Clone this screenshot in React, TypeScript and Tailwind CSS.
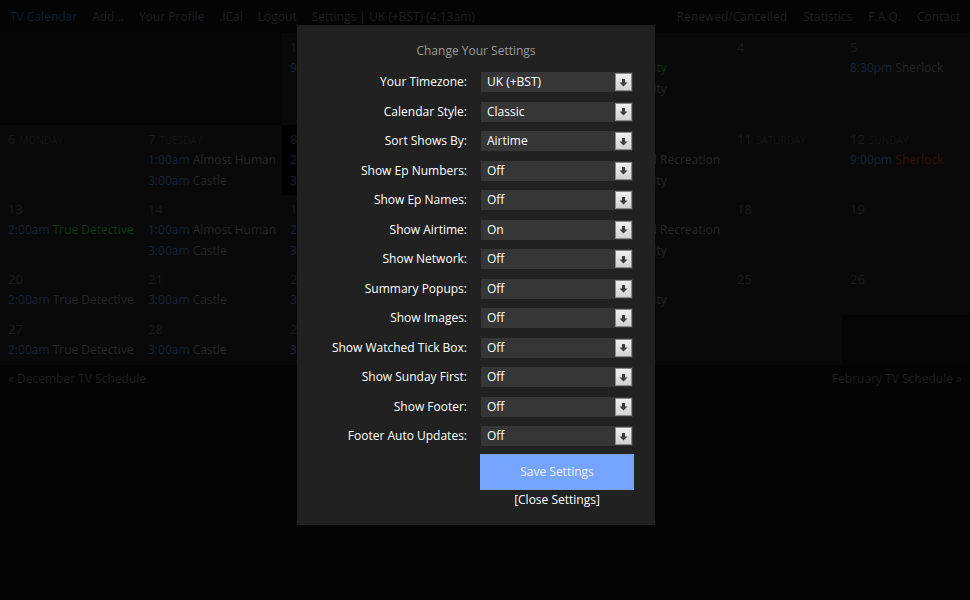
import React from 'react';

type Entry = { time: string; show: string; tone?: 'green' | 'red' };
type Cell = { date?: string; day?: string; entries?: Entry[]; bg?: 'empty' | 'today' | 'cell' };

const colWidths = 'grid-cols-[140px_142px_138px_129px_180px_113px_128px]';

const weeks: { height: string; cells: Cell[] }[] = [
  {
    height: 'h-[92px]',
    cells: [
      { bg: 'empty' },
      { bg: 'empty' },
      { date: '1', entries: [{ time: '9:00pm', show: 'Sherlock' }] },
      { date: '2' },
      { date: '3', entries: [{ time: '2:00am', show: 'Community', tone: 'green' }, { time: '2:30am', show: 'Community' }] },
      { date: '4' },
      { date: '5', entries: [{ time: '8:30pm', show: 'Sherlock' }] },
    ],
  },
  {
    height: 'h-[70px]',
    cells: [
      { date: '6', day: 'Monday' },
      { date: '7', day: 'Tuesday', entries: [{ time: '1:00am', show: 'Almost Human' }, { time: '3:00am', show: 'Castle' }] },
      { date: '8', day: 'Wednesday', bg: 'today', entries: [{ time: '2:00am', show: 'Arrow' }, { time: '3:00am', show: 'Nashville' }] },
      { date: '9', day: 'Thursday' },
      { date: '10', day: 'Friday', entries: [{ time: '1:30am', show: 'Parks and Recreation' }, { time: '2:00am', show: 'Community' }] },
      { date: '11', day: 'Saturday' },
      { date: '12', day: 'Sunday', entries: [{ time: '9:00pm', show: 'Sherlock', tone: 'red' }] },
    ],
  },
  {
    height: 'h-[70px]',
    cells: [
      { date: '13', entries: [{ time: '2:00am', show: 'True Detective', tone: 'green' }] },
      { date: '14', entries: [{ time: '1:00am', show: 'Almost Human' }, { time: '3:00am', show: 'Castle' }] },
      { date: '15', entries: [{ time: '2:00am', show: 'Arrow' }, { time: '3:00am', show: 'Nashville' }] },
      { date: '16' },
      { date: '17', entries: [{ time: '1:30am', show: 'Parks and Recreation' }, { time: '2:00am', show: 'Community' }] },
      { date: '18' },
      { date: '19' },
    ],
  },
  {
    height: 'h-[50px]',
    cells: [
      { date: '20', entries: [{ time: '2:00am', show: 'True Detective' }] },
      { date: '21', entries: [{ time: '3:00am', show: 'Castle' }] },
      { date: '22', entries: [{ time: '3:00am', show: 'Nashville' }] },
      { date: '23' },
      { date: '24', entries: [{ time: '2:00am', show: 'Community' }] },
      { date: '25' },
      { date: '26' },
    ],
  },
  {
    height: 'h-[50px]',
    cells: [
      { date: '27', entries: [{ time: '2:00am', show: 'True Detective' }] },
      { date: '28', entries: [{ time: '3:00am', show: 'Castle' }] },
      { date: '29', entries: [{ time: '3:00am', show: 'Nashville' }] },
      { date: '30' },
      { date: '31' },
      { bg: 'cell' },
      { bg: 'empty' },
    ],
  },
];

const settings: [string, string][] = [
  ['Your Timezone:', 'UK (+BST)'],
  ['Calendar Style:', 'Classic'],
  ['Sort Shows By:', 'Airtime'],
  ['Show Ep Numbers:', 'Off'],
  ['Show Ep Names:', 'Off'],
  ['Show Airtime:', 'On'],
  ['Show Network:', 'Off'],
  ['Summary Popups:', 'Off'],
  ['Show Images:', 'Off'],
  ['Show Watched Tick Box:', 'Off'],
  ['Show Sunday First:', 'Off'],
  ['Show Footer:', 'Off'],
  ['Footer Auto Updates:', 'Off'],
];

const CalCell = ({ cell }: { cell: Cell }) => {
  const bg =
    cell.bg === 'empty' ? 'bg-[#050505]' : cell.bg === 'today' ? 'bg-[#010101]' : 'bg-[#090909]';
  return (
    <div className={`${bg} px-2 pt-1 overflow-hidden whitespace-nowrap`}>
      {cell.date && (
        <div className="h-[20px] leading-[20px] text-[13px] text-[#1b1b1b]">
          {cell.date}
          {cell.day && <span className="ml-1 text-[10px] uppercase text-[#151515]">{cell.day}</span>}
        </div>
      )}
      {cell.entries?.map((e, i) => (
        <div key={i} className="h-[21px] leading-[21px]">
          <span className="text-[#15233a]">{e.time}</span>{' '}
          <span
            className={
              e.tone === 'green' ? 'text-[#0c360f]' : e.tone === 'red' ? 'text-[#380e06]' : 'text-[#262626]'
            }
          >
            {e.show}
          </span>
        </div>
      ))}
    </div>
  );
};

const SelectBox = ({ value }: { value: string }) => (
  <div className="h-[20px] bg-[#363636] flex items-center justify-between pl-[6px] pr-[1px] text-white">
    <span>{value}</span>
    <span className="w-[17px] h-[18px] border border-[#8a8a8a] bg-gradient-to-b from-[#f0f0f0] to-[#d2d2d2] flex items-center justify-center">
      <svg width="9" height="9" viewBox="0 0 9 9">
        <path d="M3 1h3v3.5h2.5L4.5 8.5 0.5 4.5H3z" fill="#3c3c3c" />
      </svg>
    </span>
  </div>
);

export default function App() {
  return (
    <div
      className="relative w-[970px] h-[600px] bg-[#040404] text-[12px] overflow-hidden"
      style={{ fontFamily: '"Open Sans", "Noto Sans", sans-serif' }}
    >
      {/* top nav */}
      <div className="h-[33px] flex items-center justify-between px-[10px] text-[#1f1f1f]">
        <div className="flex gap-[15px]">
          <span className="text-[#0e1c32]">TV Calendar</span>
          <span>Add...</span>
          <span>Your Profile</span>
          <span>.iCal</span>
          <span>Logout</span>
          <span>Settings | UK (+BST) (4:13am)</span>
        </div>
        <div className="flex gap-[16px]">
          <span>Renewed/Cancelled</span>
          <span>Statistics</span>
          <span>F.A.Q.</span>
          <span>Contact</span>
        </div>
      </div>

      {/* calendar */}
      <div className="flex flex-col">
        {weeks.map((w, i) => (
          <div key={i} className={`grid ${colWidths} ${w.height}`}>
            {w.cells.map((c, j) => (
              <CalCell key={j} cell={c} />
            ))}
          </div>
        ))}
      </div>
      <div className="flex justify-between px-2 mt-[5px] text-[#1f1f1f]">
        <span>« December TV Schedule</span>
        <span>February TV Schedule »</span>
      </div>

      {/* settings modal */}
      <div className="absolute left-[297px] top-[25px] w-[358px] h-[500px] bg-[#212121] pt-[16px]">
        <div className="text-center text-[#9a9a9a] leading-[20px]">Change Your Settings</div>
        <div className="mt-[11px] px-5 grid grid-cols-[150px_152px] gap-x-[14px] gap-y-[9.5px] items-center">
          {settings.map(([label, value]) => (
            <React.Fragment key={label}>
              <div className="text-right text-white whitespace-nowrap leading-[20px]">{label}</div>
              <SelectBox value={value} />
            </React.Fragment>
          ))}
          <div />
          <div className="-ml-px -mt-[2px] w-[154px]">
            <button className="w-full h-[36px] bg-[#75a4ff] text-[#eef3ff]">Save Settings</button>
            <div className="text-center text-white leading-[20px]">[Close Settings]</div>
          </div>
        </div>
      </div>
    </div>
  );
}
